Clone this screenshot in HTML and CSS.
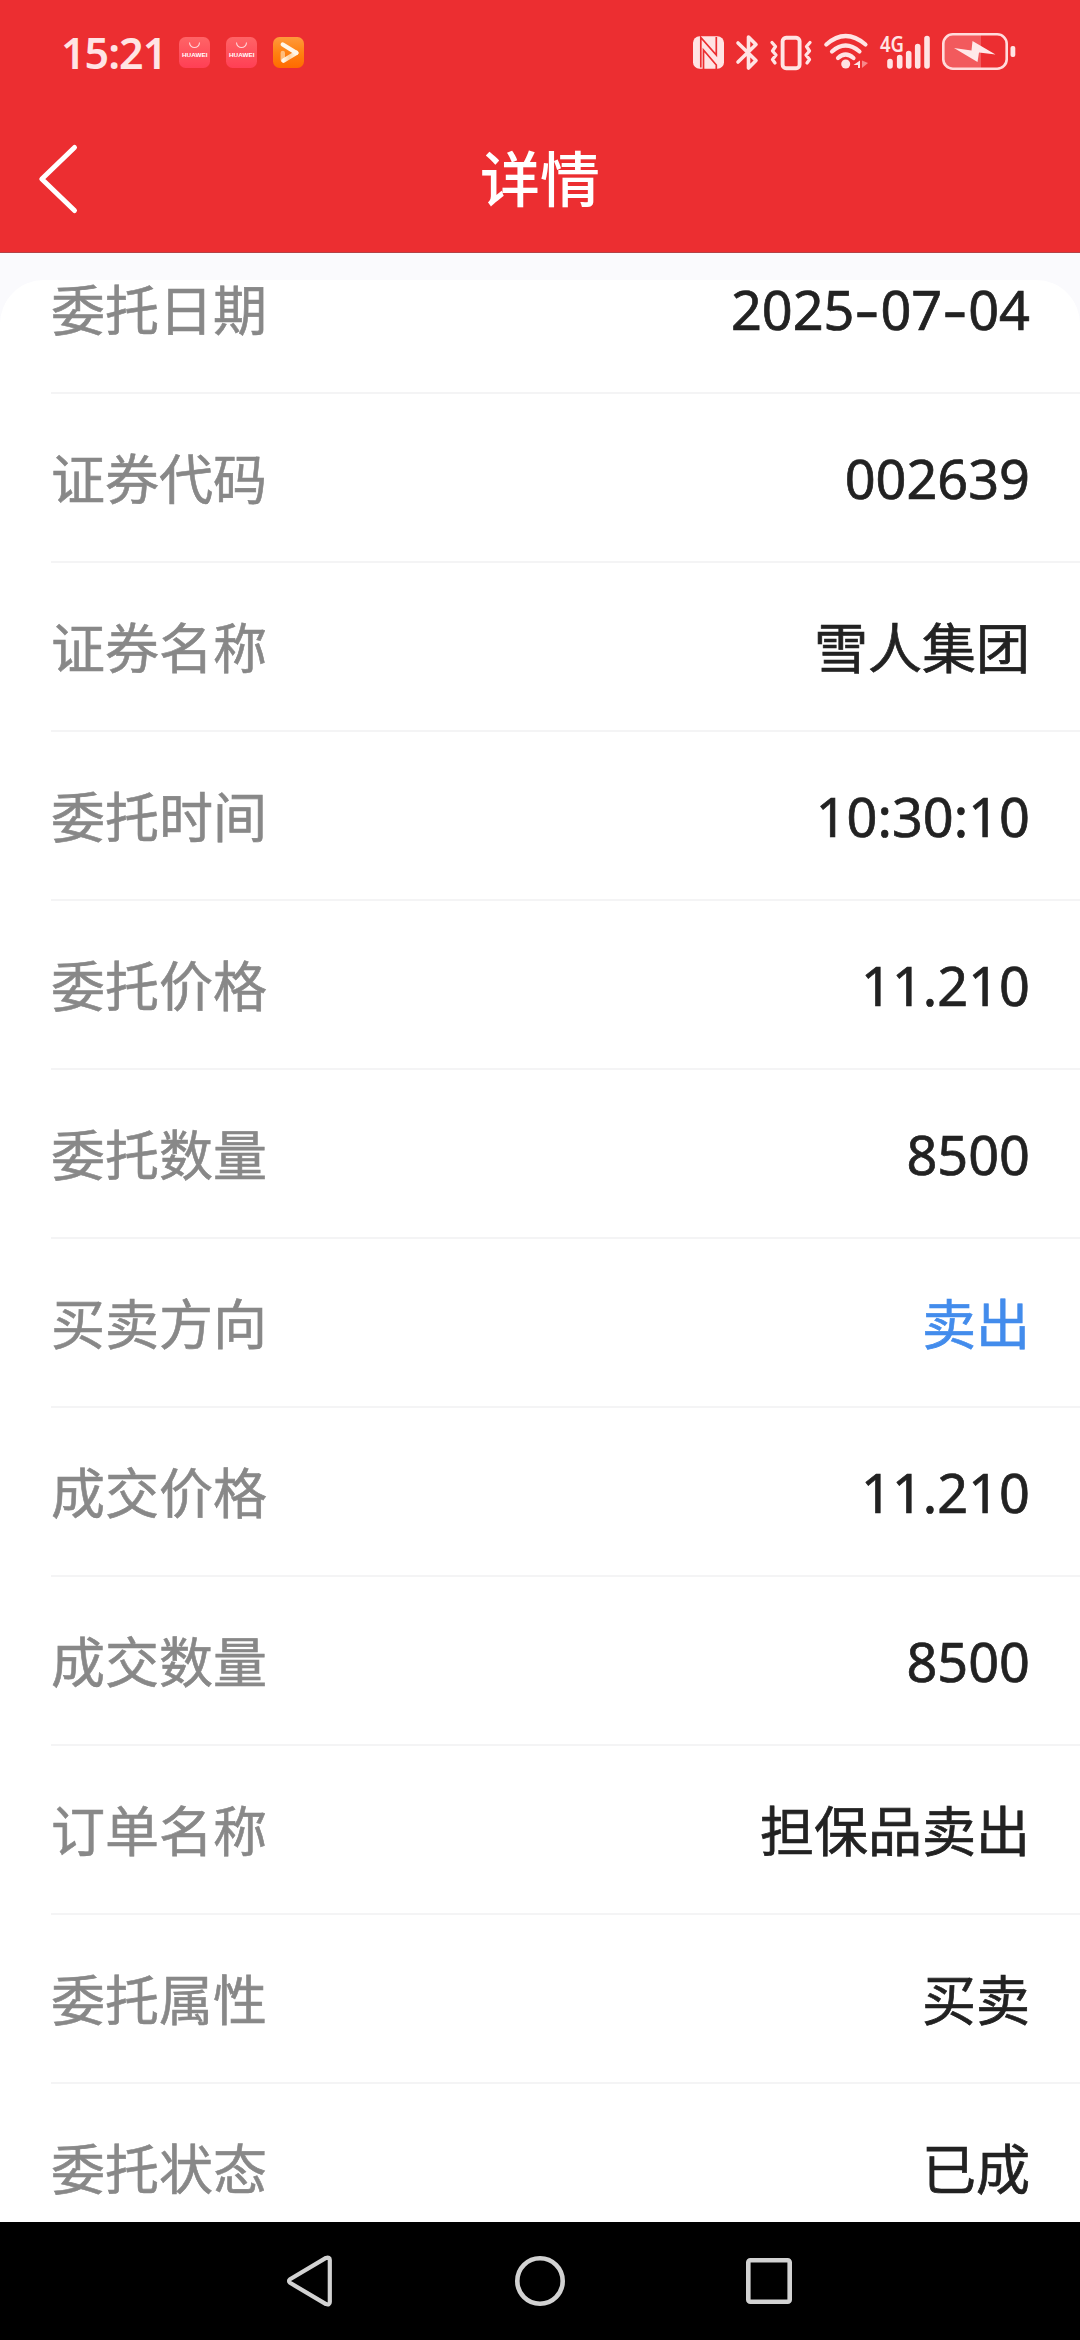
FILE: index.html
```html
<!DOCTYPE html>
<html lang="zh-CN">
<head>
<meta charset="utf-8">
<title>详情</title>
<link rel="stylesheet" href="styles.css">
</head>
<body>
<div class="screen">
  <header class="top">
    <div class="status">
      <div class="status-left">
        <span class="clock">15:21</span>
        <svg class="app" viewBox="0 0 31 31"><defs><linearGradient id="pink" x2="0" y2="1"><stop stop-color="#ff6466"/><stop offset="1" stop-color="#ff3f55"/></linearGradient></defs><rect width="31" height="31" rx="6.5" fill="url(#pink)"/><path d="M10.5 5.5a5 5 0 0 0 10 0" fill="none" stroke="#ffd5d8" stroke-width="1.1"/><text x="15.7" y="19.9" class="brand" textLength="25.5" lengthAdjust="spacingAndGlyphs">HUAWEI</text></svg>
        <svg class="app" viewBox="0 0 31 31"><rect width="31" height="31" rx="6.5" fill="url(#pink)"/><path d="M10.5 5.5a5 5 0 0 0 10 0" fill="none" stroke="#ffd5d8" stroke-width="1.1"/><text x="15.7" y="19.9" class="brand" textLength="25.5" lengthAdjust="spacingAndGlyphs">HUAWEI</text></svg>
        <svg class="app" viewBox="0 0 31 31"><defs><linearGradient id="amber" x2="0" y2="1"><stop stop-color="#ff9a3c"/><stop offset=".5" stop-color="#ff8212"/><stop offset="1" stop-color="#ff6a00"/></linearGradient><linearGradient id="fold" x1="1" x2="0"><stop stop-color="#fff6ea"/><stop offset=".55" stop-color="#ffd3a3"/><stop offset="1" stop-color="#fff6ea"/></linearGradient></defs><rect width="31" height="31" rx="6.5" fill="url(#amber)"/><path d="M9.800 16v7" stroke="#ffbd7c" stroke-width="4.400" stroke-linecap="round"/><path d="M23.300 15.800 10.500 23.700" stroke="url(#fold)" stroke-width="4.400" stroke-linecap="round"/><path d="M9.800 7.500 23.300 15.800" stroke="#fff6ea" stroke-width="4.400" stroke-linecap="round"/></svg>
      </div>
      <div class="status-right">
        <svg class="nfc" viewBox="0 0 31 33"><rect y=".3" width="31" height="32.400" rx="6.500" fill="#ffe4e4"/><path d="M7.800 31.500V1.500L23.300 19V1M7.800 1V14M10.500 33V14L23.300 29V33" fill="none" stroke="#ec2e31" stroke-width="1.700"/></svg>
        <svg class="bt" viewBox="0 0 22 35"><path d="M2 8 20 25.500 12.500 33V2L20 9.500 2 27" fill="none" stroke="#ffe4e4" stroke-width="3.600" stroke-linecap="round" stroke-linejoin="round"/></svg>
        <svg class="vib" viewBox="0 0 42 34"><rect x="12.600" y="1.800" width="17" height="30.400" rx="3.500" fill="none" stroke="#ffe4e4" stroke-width="3.900"/><path d="M2 6.500 5.500 10.500 2.500 15 6 19 2.500 23.500 5 27M40 6.500 36.500 10.500 39.500 15 36 19 39.500 23.500 37 27" fill="none" stroke="#ffe4e4" stroke-width="3.300" stroke-linecap="round" stroke-linejoin="round"/></svg>
        <svg class="wifi" viewBox="0 0 46 35"><g fill="none" stroke="#ffe4e4" stroke-width="4.200" stroke-linecap="round"><path d="M2.300 10.500Q21.500-6.500 41.500 10.500M8 17.500Q21.500 5.500 35.500 17.500M14 24Q21.500 17 29.500 24"/></g><circle cx="21.700" cy="30" r="4.500" fill="#ffe4e4"/><path d="M36 26.500v7.500h-2v-3H29.500Z" fill="#ffe4e4"/><path d="M38 26.500v7.500l6-5Z" fill="#f7888a"/></svg>
        <svg class="cell" viewBox="0 0 50 35"><text x="0" y="16.500" class="gen" textLength="24" lengthAdjust="spacingAndGlyphs">4G</text><path d="M10 26.500v4.500M19.700 22.500v8.500M28.700 18.500v12.500M37.700 11.500v19.500M47 3.500v27.500" stroke="#ffe4e4" stroke-width="5.600" stroke-linecap="round"/></svg>
        <svg class="bat" viewBox="0 0 74 37"><path d="M39 1.500H11Q1.500 1.500 1.500 11v15q0 9.500 9.500 9.500h28Z" fill="#f25a5d"/><rect x="1.300" y="1.300" width="63.400" height="34.400" rx="9.500" fill="none" stroke="#ffdcdc" stroke-width="2.600"/><path d="M12 15 29.500 17.500 30.500 8 53.500 21.500 37 19.500 35.500 29Z" fill="#ffe9e9"/><rect x="68.500" y="13" width="4.800" height="11" rx="2" fill="#ffe4e4"/></svg>
      </div>
    </div>
    <nav class="titlebar">
      <svg class="back" viewBox="0 0 38 68"><path d="M35.500 2.500 2.800 34 35.500 65.500" fill="none" stroke="#fff" stroke-width="5" stroke-linecap="round" stroke-linejoin="round"/></svg>
      <h1 class="title">详情</h1>
    </nav>
  </header>
  <main class="content">
    <section class="card">
      <div class="row"><span class="label">委托日期</span><span class="value num">2025<i class="dash">-</i>07<i class="dash">-</i>04</span></div>
      <div class="row"><span class="label">证券代码</span><span class="value num">002639</span></div>
      <div class="row"><span class="label">证券名称</span><span class="value">雪人集团</span></div>
      <div class="row"><span class="label">委托时间</span><span class="value num">10:30:10</span></div>
      <div class="row"><span class="label">委托价格</span><span class="value num">11.210</span></div>
      <div class="row"><span class="label">委托数量</span><span class="value num">8500</span></div>
      <div class="row"><span class="label">买卖方向</span><span class="value sell">卖出</span></div>
      <div class="row"><span class="label">成交价格</span><span class="value num">11.210</span></div>
      <div class="row"><span class="label">成交数量</span><span class="value num">8500</span></div>
      <div class="row"><span class="label">订单名称</span><span class="value">担保品卖出</span></div>
      <div class="row"><span class="label">委托属性</span><span class="value">买卖</span></div>
      <div class="row"><span class="label">委托状态</span><span class="value">已成</span></div>
    </section>
  </main>
  <footer class="navbar">
    <svg class="key" viewBox="0 0 50 50"><path d="M4 23.200 40 1.900Q43.800 .800 43.800 4v42Q43.800 49.200 40 48.100L4 26.800Q2 25 4 23.200Z" fill="none" stroke="#d2d2d2" stroke-width="4.200" stroke-linejoin="round"/></svg>
    <svg class="key" viewBox="0 0 50 50"><circle cx="25" cy="25" r="22.700" fill="none" stroke="#d2d2d2" stroke-width="4.600"/></svg>
    <svg class="key" viewBox="0 0 50 50"><rect x="4.300" y="4.300" width="41.400" height="41.400" rx="2" fill="none" stroke="#d2d2d2" stroke-width="4.600"/></svg>
  </footer>
</div>
</body>
</html>
```
FILE: styles.css
```css
* { box-sizing: border-box; }
body {
  margin: 0;
  font-family: "Noto Sans CJK SC", sans-serif;
  color: #222;
}
svg { display: block; flex: none; overflow: visible; }
.screen {
  display: flex;
  flex-direction: column;
  width: 1080px;
  height: 2340px;
  overflow: hidden;
  background: #fafafd;
}
.top {
  flex: none;
  height: 253px;
  background: #ec2e31;
  border-bottom: 1px solid #b34347;
}
.status {
  display: flex;
  justify-content: space-between;
  height: 105px;
  padding: 0 64px 0 61px;
}
.status-left, .status-right { display: flex; align-items: center; height: 105px; }
.status-left { gap: 16px; }
.clock {
  width: 102px;
  font: 600 43px/50px "Noto Sans", sans-serif;
  letter-spacing: -1px;
  color: #ffe4e4;
  white-space: nowrap;
}
.app { width: 31px; height: 31px; }
.brand { font: 700 6px "Liberation Sans", sans-serif; fill: #fff; text-anchor: middle; }
.nfc { width: 31px; height: 33px; }
.bt { width: 22px; height: 35px; margin-left: 12px; }
.vib { width: 42px; height: 34px; margin-left: 12px; }
.wifi { width: 46px; height: 35px; margin: -3px 0 0 12px; }
.cell { width: 50px; height: 35px; margin-left: 10px; }
.gen { font: 600 21px "Noto Sans", sans-serif; fill: #ffe4e4; }
.bat { width: 74px; height: 37px; margin: -2px 0 0 12px; }
.titlebar {
  display: grid;
  grid-template-columns: 1fr auto 1fr;
  align-items: center;
  height: 147px;
  padding: 0 39px;
}
.back { width: 38px; height: 68px; }
.title {
  margin: 0;
  padding-bottom: 6px;
  font-size: 60px;
  font-weight: 500;
  line-height: 80px;
  color: #fff;
}
.content { flex: 1; min-height: 0; padding-top: 27px; }
.card {
  display: flex;
  flex-direction: column;
  height: 100%;
  padding-left: 51px;
  background: #fff;
  border-radius: 44px 44px 0 0;
}
.row {
  display: flex;
  flex: none;
  align-items: center;
  justify-content: space-between;
  height: 169px;
  padding-right: 50px;
  border-bottom: 2px solid #f4f4f5;
  font-size: 54px;
  line-height: 54px;
}
/* The list is scrolled, so the first row starts above the card's edge. */
.row:first-child { margin-top: -55px; }
.row:last-child { border-bottom: 0; padding-bottom: 2px; }
.label { padding-bottom: 2px; color: #888; -webkit-text-stroke: .6px #888; }
.value { padding-bottom: 2px; color: #222; -webkit-text-stroke: .7px #222; }
.num { padding-bottom: 0; font-family: "Noto Sans", sans-serif; }
.sell { color: #438cec; -webkit-text-stroke-color: #438cec; }
.dash {
  display: inline-block;
  width: 26px;
  font-style: normal;
  text-align: center;
  transform: scaleX(1.4);
}
.navbar {
  display: flex;
  flex: none;
  align-items: flex-start;
  justify-content: center;
  gap: 179px;
  height: 118px;
  padding-top: 34px;
  background: #000;
}
.key { width: 50px; height: 50px; }
```
